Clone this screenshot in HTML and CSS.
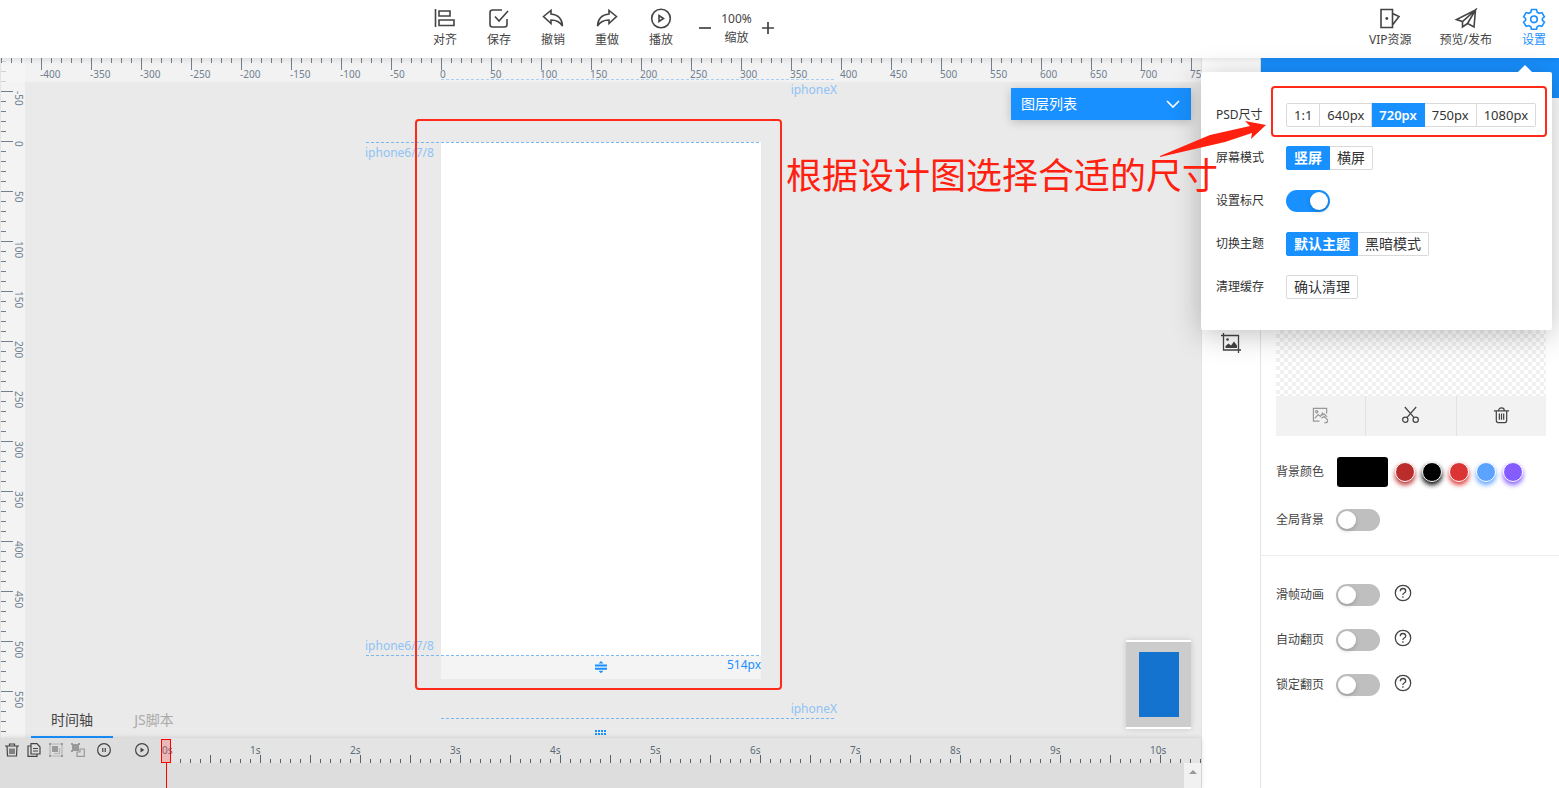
FILE: index.html
```html
<!DOCTYPE html>
<html lang="zh-CN">
<head>
<meta charset="utf-8">
<title>页面编辑器</title>
<link rel="stylesheet" href="styles.css">
</head>
<body>
<header class="header">
  <nav class="tools">
    <button class="tool"><svg class="icon" viewBox="0 0 22 22"><path d="M1.500 1v18M5 3h11v5H5zM5 12h15v5.500H5z"/></svg>对齐</button>
    <button class="tool"><svg class="icon" viewBox="0 0 22 22"><path d="M14 2H4.500Q2 2 2 4.500v12Q2 19 4.500 19h12q2.500 0 2.500-2.500V11M7 8.500l4 4.500 9-10"/></svg>保存</button>
    <button class="tool"><svg class="icon" viewBox="0 0 22 22"><path d="M1.500 8.500 9 2.500v3.500c6 .5 11 4 11.500 12-2.500-4-6-6-11.500-6v3.500z"/></svg>撤销</button>
    <button class="tool"><svg class="icon" viewBox="0 0 22 22"><path d="M20.500 8.500 13 2.500v3.500c-6 .5-11 4-11.500 12 2.500-4 6-6 11.500-6v3.500z"/></svg>重做</button>
    <button class="tool"><svg class="icon" viewBox="0 0 22 22"><circle cx="11" cy="10.500" r="9.300"/><path d="M9 7.500v6l4.500-3z"/></svg>播放</button>
    <div class="zoom">
      <button class="step" aria-label="缩小"><svg viewBox="0 0 14 14"><path d="M1 7h12"/></svg></button>
      <span class="level">100%<br>缩放</span>
      <button class="step" aria-label="放大"><svg viewBox="0 0 14 14"><path d="M1 7h12M7 1v12"/></svg></button>
    </div>
  </nav>
  <nav class="actions">
    <button class="tool"><svg class="icon" viewBox="0 0 22 22"><path d="M2 1.500h11.500v18H2zM13.500 5.500l6.500 3-6.500 8.500"/><circle class="solid" cx="7.800" cy="10.500" r="1.400"/></svg>VIP资源</button>
    <button class="tool"><svg class="icon" viewBox="0 0 22 22"><path d="M20.500 2 1.500 11.500l6 2L20.500 2 19 19l-6.500-3.500zM7.500 13.500v5.500l5-3.500M20.500 2l-8 13.500"/></svg>预览/发布</button>
    <button class="tool current"><svg class="icon" viewBox="0 0 22 22"><path d="M8.500 1.500h5l.7 2.700 2 1.100 2.700-.7 2.500 4.200-2 1.700 0 1.800 2 1.800-2.500 4.200-2.700-.8-2 1.200-.7 2.500h-5l-.7-2.500-2-1.200-2.700.8-2.500-4.200 2-1.800V10.500l-2-1.700 2.500-4.200 2.700.7 2-1.100z"/><circle cx="11" cy="11.300" r="3.300"/></svg>设置</button>
  </nav>
</header>

<main class="main">
  <section class="workspace">
    <div class="stage">
      <div class="ruler-y">
        <span>-50</span><span>0</span><span>50</span><span>100</span><span>150</span><span>200</span><span>250</span><span>300</span><span>350</span><span>400</span><span>450</span><span>500</span><span>550</span>
      </div>
      <div class="ruler-x">
        <span>-400</span><span>-350</span><span>-300</span><span>-250</span><span>-200</span><span>-150</span><span>-100</span><span>-50</span><span>0</span><span>50</span><span>100</span><span>150</span><span>200</span><span>250</span><span>300</span><span>350</span><span>400</span><span>450</span><span>500</span><span>550</span><span>600</span><span>650</span><span>700</span><span>750</span>
      </div>
      <div class="guide x-top"></div>
      <span class="device x-top-name">iphoneX</span>
      <div class="page"></div>
      <div class="page-foot">
        <svg class="resize" viewBox="0 0 12 12"><path d="M0 3.500h12v2H0zM0 6.700h12v2H0zM3.500 2.500 6 0l2.500 2.500zM3.500 9.700 6 12.200l2.500-2.500z"/></svg>
        <span>514px</span>
      </div>
      <div class="guide six-top"></div>
      <span class="device six-top-name">iphone6/7/8</span>
      <div class="guide six-bottom"></div>
      <span class="device six-bottom-name">iphone6/7/8</span>
      <span class="device x-bottom-name">iphoneX</span>
      <div class="guide x-bottom"></div>
      <div class="grip"></div>
      <button class="layers">图层列表<svg viewBox="0 0 14 8"><path d="M1 1l6 6 6-6"/></svg></button>
      <div class="minimap"><div></div></div>
      <div class="tabs">
        <button class="tab selected">时间轴</button>
        <button class="tab">JS脚本</button>
      </div>
    </div>

    <div class="timeline">
      <div class="time-tools">
        <button aria-label="删除"><svg viewBox="0 0 14 14"><path d="M0 3h14M4.500 3V1h5v2M2 3l.5 10h9L12 3M5 5.500v5.500M7 5.500v5.500M9 5.500v5.500"/></svg></button>
        <button aria-label="复制"><svg viewBox="0 0 14 14"><path d="M4 .7h6L13 4v7H4zM4 3H1v10.300h9V11M6 5.500h5M6 8h5"/></svg></button>
        <button class="muted" aria-label="组合"><svg viewBox="0 0 14 14"><path class="faint" d="M1 1h12v12H1z"/><path class="solid" d="M3 3h6v6H3zM0 0h2v2H0zM12 0h2v2h-2zM0 12h2v2H0zM12 12h2v2h-2z"/><path class="faint" d="M5 10.500h5.500V5"/></svg></button>
        <button class="muted" aria-label="拆分"><svg viewBox="0 0 14 14"><path class="solid" d="M1 1h7v7H1zM0 0h2v2H0zM7 0h2v2H7zM0 7h2v2H0z"/><path d="M9 6h4.300v7.300H6V9h3z"/></svg></button>
        <button aria-label="暂停"><svg viewBox="0 0 14 14"><circle cx="7" cy="7" r="6.400"/><path d="M5.800 5v4M8.200 5v4"/></svg></button>
        <button class="play" aria-label="播放时间轴"><svg viewBox="0 0 14 14"><circle cx="7" cy="7" r="6.400"/><path class="solid" d="M5.500 4.500v5L9.300 7z"/></svg></button>
      </div>
      <div class="track">
        <div class="seconds">
          <span>0s</span><span>1s</span><span>2s</span><span>3s</span><span>4s</span><span>5s</span><span>6s</span><span>7s</span><span>8s</span><span>9s</span><span>10s</span>
        </div>
        <div class="playhead"></div>
        <button class="scroll-up" aria-label="向上滚动"><svg viewBox="0 0 8 4"><path d="M0 4 4 0l4 4z"/></svg></button>
      </div>
    </div>
  </section>

  <aside class="rail">
    <button aria-label="图片"><svg viewBox="0 0 20 20"><path d="M2.500 0v17H20M0 2.500h17.500V20"/><circle class="solid" cx="6.500" cy="6.500" r="1.300"/><path class="solid" d="M4.500 15v-2l3-2.500 2.500 2 3-4 3 4V15z"/></svg></button>
  </aside>

  <aside class="panel">
    <div class="panel-head"></div>
    <section class="background">
      <div class="preview"></div>
      <div class="preview-tools">
        <button class="muted" aria-label="更换图片"><svg viewBox="0 0 18 18"><path d="M8 15H1.500V1.500h14V7M3 12l3.500-4 2.500 2 2.500-4M9 9l4-1.500 3 3M10 12l3-2 3 3q2 4-3 3.500"/><circle cx="5" cy="5" r="1.200"/></svg></button>
        <button aria-label="裁剪"><svg viewBox="0 0 18 18"><path d="M3 0l10 11.500M15 0 5 11.500"/><circle cx="3.500" cy="13.500" r="2.800"/><circle cx="14.500" cy="13.500" r="2.800"/></svg></button>
        <button aria-label="删除图片"><svg viewBox="0 0 18 18"><path d="M1 4h16M6 4Q6 1 9 1t3 3M3.500 4v10q0 2.500 2 2.500h7q2 0 2-2.500V4M6.700 7v6.500M9 7v6.500M11.300 7v6.500"/></svg></button>
      </div>
      <div class="field color">
        <span>背景颜色</span>
        <button class="swatch" aria-label="当前颜色"></button>
        <button class="dot crimson" aria-label="深红"></button>
        <button class="dot black" aria-label="黑色"></button>
        <button class="dot red" aria-label="红色"></button>
        <button class="dot blue" aria-label="蓝色"></button>
        <button class="dot violet" aria-label="紫色"></button>
      </div>
      <label class="field global"><span>全局背景</span><input class="switch" type="checkbox"></label>
    </section>
    <section class="paging">
      <div class="field"><label for="slide">滑帧动画</label><input class="switch" id="slide" type="checkbox"><button class="help" aria-label="滑帧动画说明"><svg viewBox="0 0 18 18"><circle cx="9" cy="9" r="7.700"/><path d="M6.300 7.200q0-2.700 2.700-2.700t2.700 2.500q0 1.200-1.500 2T8.900 11M8.900 12.300v1.400"/></svg></button></div>
      <div class="field"><label for="auto">自动翻页</label><input class="switch" id="auto" type="checkbox"><button class="help" aria-label="自动翻页说明"><svg viewBox="0 0 18 18"><circle cx="9" cy="9" r="7.700"/><path d="M6.300 7.200q0-2.700 2.700-2.700t2.700 2.500q0 1.200-1.500 2T8.900 11M8.900 12.300v1.400"/></svg></button></div>
      <div class="field"><label for="lock">锁定翻页</label><input class="switch" id="lock" type="checkbox"><button class="help" aria-label="锁定翻页说明"><svg viewBox="0 0 18 18"><circle cx="9" cy="9" r="7.700"/><path d="M6.300 7.200q0-2.700 2.700-2.700t2.700 2.500q0 1.200-1.500 2T8.900 11M8.900 12.300v1.400"/></svg></button></div>
    </section>
  </aside>
</main>

<div class="settings">
  <div class="setting"><span class="name">PSD尺寸</span>
    <div class="segments sizes">
      <label><input type="radio" name="psd">1:1</label><label><input type="radio" name="psd">640px</label><label><input type="radio" name="psd" checked>720px</label><label><input type="radio" name="psd">750px</label><label><input type="radio" name="psd">1080px</label>
    </div>
  </div>
  <div class="setting"><span class="name">屏幕模式</span>
    <div class="segments"><label><input type="radio" name="screen" checked>竖屏</label><label><input type="radio" name="screen">横屏</label></div>
  </div>
  <div class="setting"><label class="name" for="ruler">设置标尺</label><input class="switch" id="ruler" type="checkbox" checked></div>
  <div class="setting"><span class="name">切换主题</span>
    <div class="segments"><label><input type="radio" name="theme" checked>默认主题</label><label><input type="radio" name="theme">黑暗模式</label></div>
  </div>
  <div class="setting"><span class="name">清理缓存</span><button class="clear">确认清理</button></div>
</div>

<div class="mark mark-page"></div>
<div class="mark mark-size"></div>
<p class="note">根据设计图选择合适的尺寸</p>
<svg class="arrow" viewBox="0 0 106 38"><path d="M0 36 50 15 90 6 85 1l21 4-15 14 1-6-27 9L0 37z"/></svg>
</body>
</html>
```
FILE: styles.css
```css
* { box-sizing: border-box; }
body {
  margin: 0;
  height: 100vh;
  display: flex;
  flex-direction: column;
  position: relative;
  overflow: hidden;
  background: #fff;
  color: #444;
  font: 12px/18px "Noto Sans", "Noto Sans CJK SC", sans-serif;
}
button {
  display: flex;
  align-items: center;
  justify-content: center;
  padding: 0;
  border: 0;
  background: none;
  color: inherit;
  font: inherit;
  cursor: pointer;
}
svg { fill: none; stroke: currentColor; stroke-width: 1.3; overflow: visible; }
.solid { fill: currentColor; stroke: none; }
.faint { opacity: .6; }

/* Header */
.header {
  display: flex;
  flex: none;
  height: 58px;
  position: relative;
  z-index: 2;
  background: #fff;
  box-shadow: 0 1px 6px rgba(0, 0, 0, .12);
}
.tools { flex: 1; display: flex; justify-content: center; padding-right: 2px; }
.tool { flex-direction: column; width: 54px; height: 58px; padding-bottom: 2px; gap: 1px; white-space: nowrap; }
.icon { width: 22px; height: 22px; stroke-width: 1.6; }
.zoom { display: flex; align-items: center; padding: 0 6px 2px 10px; }
.step svg { width: 14px; height: 14px; stroke-width: 1.7; }
.level { width: 49px; text-align: center; line-height: 19px; }
.actions { width: 358px; display: flex; justify-content: flex-end; gap: 20px; padding-right: 13px; }
.actions .tool { width: auto; min-width: 24px; }
.actions .tool:nth-child(2) { margin: 0 10px 0 8px; }
.current { color: #1890ff; }

/* Workspace */
.main { flex: 1; min-height: 0; display: flex; }
.workspace { flex: 1; min-width: 0; display: flex; flex-direction: column; }
.stage { flex: 1; position: relative; overflow: hidden; background: #eaeaea; border-left: 1px solid #e4e4e4; }
.ruler-x, .ruler-y { position: absolute; top: 0; left: 0; display: flex; overflow: hidden; color: #708090; font-size: 10px; line-height: 12px; }
.ruler-x {
  width: 100%;
  height: 24px;
  padding-left: 39px;
  background:
    repeating-linear-gradient(90deg, #708090 0 1px, transparent 1px 50px) 40px 0 / 100% 12px no-repeat,
    repeating-linear-gradient(90deg, #708090 0 1px, transparent 1px 10px) 0 0 / 100% 5px no-repeat,
    rgba(245, 245, 245, .7);
}
.ruler-x span { flex: none; width: 50px; padding-top: 10px; }
.ruler-y {
  flex-direction: column;
  width: 24px;
  height: 100%;
  padding-top: 33px;
  background:
    repeating-linear-gradient(#708090 0 1px, transparent 1px 50px) 0 33px / 12px 100% no-repeat,
    repeating-linear-gradient(#708090 0 1px, transparent 1px 10px) 0 3px / 5px 100% no-repeat,
    #f3f3f3;
}
.ruler-y span { flex: none; width: 24px; height: 50px; padding-right: 0; writing-mode: vertical-rl; }
.page { position: absolute; left: 440px; top: 84px; width: 320px; height: 514px; background: #fff; }
.page-foot {
  position: absolute;
  left: 440px;
  top: 598px;
  width: 320px;
  height: 23px;
  display: flex;
  align-items: flex-start;
  justify-content: flex-end;
  background: #f4f4f4;
  color: #1890ff;
}
.resize { position: absolute; left: 154px; top: 5px; width: 12px; height: 12px; fill: #1890ff; stroke: none; }
.guide {
  position: absolute;
  height: 1px;
  background: repeating-linear-gradient(90deg, #7ab8f5 0 3px, transparent 3px 5px);
}
.device { position: absolute; color: #8fc3f5; }
.x-top { left: 440px; top: 21px; width: 395px; opacity: .6; }
.x-top-name { right: 364px; top: 23px; }
.x-bottom { left: 440px; top: 660px; width: 395px; }
.x-bottom-name { right: 364px; top: 642px; }
.six-top { left: 365px; top: 84px; width: 395px; }
.six-top-name { left: 364px; top: 86px; }
.six-bottom { left: 365px; top: 597px; width: 395px; }
.six-bottom-name { left: 364px; top: 579px; }
.grip {
  position: absolute;
  left: 594px;
  top: 672px;
  width: 12px;
  height: 5px;
  background:
    repeating-linear-gradient(90deg, #1890ff 0 2px, transparent 2px 3px) 0 0 / 100% 2px no-repeat,
    repeating-linear-gradient(90deg, #1890ff 0 2px, transparent 2px 3px) 0 3px / 100% 2px no-repeat;
}
.layers {
  position: absolute;
  right: 10px;
  top: 30px;
  width: 180px;
  height: 32px;
  justify-content: space-between;
  padding: 0 11px 0 10px;
  background: #1890ff;
  color: #fff;
  font-size: 14px;
  box-shadow: 0 2px 10px rgba(0, 0, 0, .2);
}
.layers svg { width: 14px; height: 8px; stroke-width: 1.6; }
.minimap {
  position: absolute;
  right: 10px;
  bottom: 9px;
  width: 65px;
  padding: 10px 12px 10px 13px;
  background: #ccc;
  border: solid #fff;
  border-width: 2px 0;
  box-shadow: 0 0 6px rgba(0, 0, 0, .15);
}
.minimap div { height: 65px; background: #1473cf; }
.tabs { position: absolute; left: 30px; bottom: 0; display: flex; }
.tab { width: 82px; height: 34px; border-bottom: 2px solid transparent; color: #aaa; font-size: 14px; }
.tab.selected { border-color: #1890ff; color: #444; }

/* Timeline */
.timeline { flex: none; height: 50px; display: flex; background: #ddd; box-shadow: 0 0 5px rgba(0, 0, 0, .15); z-index: 1; }
.time-tools { flex: none; display: flex; align-items: center; gap: 8px; width: 160px; height: 24px; padding-left: 5px; }
.time-tools svg { width: 14px; height: 14px; display: block; stroke-width: 1.2; }
.time-tools .play { margin-left: 16px; }
.time-tools button:nth-child(5) { margin-left: 4px; }
.muted { color: #999; }
.track { flex: 1; min-width: 0; position: relative; }
.seconds {
  display: flex;
  height: 25px;
  overflow: hidden;
  color: #5c6b75;
  font-size: 10px;
  line-height: 12px;
  padding-top: 6px;
  background:
    repeating-linear-gradient(90deg, #546570 0 1px, transparent 1px 50px) 50px 17px / 100% 8px no-repeat,
    repeating-linear-gradient(90deg, #546570 0 1px, transparent 1px 10px) 20px 21px / 100% 4px no-repeat,
    #e4e4e4;
}
.seconds span { flex: none; width: 100px; }
.seconds span:first-child { width: 90px; padding-left: 2px; }
.playhead { position: absolute; left: 1px; top: 1px; width: 10px; height: 24px; border: 1px solid #f00; background: rgba(255, 80, 80, .3); }
.playhead::after { content: ""; position: absolute; left: 4px; top: 23px; width: 1px; height: 26px; background: #f00; }
.scroll-up { position: absolute; right: 0; bottom: 0; width: 17px; height: 25px; padding-bottom: 7px; background: #f1f1f1; color: #999; }
.scroll-up svg { width: 8px; height: 4px; fill: currentColor; stroke: none; }

/* Right side */
.rail { flex: none; width: 60px; display: flex; justify-content: center; align-items: flex-start; padding-top: 275px; border: solid #e4e4e4; border-width: 0 1px; }
.rail svg { width: 20px; height: 20px; display: block; }
.panel { flex: none; width: 298px; }
.panel-head { height: 40px; background: #1890ff; }
.background { padding: 0 13px 24px 15px; border-bottom: 1px solid #eee; }
.preview { height: 298px; background: repeating-conic-gradient(#f0f0f0 0 25%, #fff 0 50%) 0 0 / 8px 8px; }
.preview-tools { display: flex; height: 40px; background: #f2f2f2; }
.preview-tools button { flex: 1; padding-bottom: 2px; }
.preview-tools button + button { border-left: 1px solid #e2e2e2; }
.preview-tools svg { width: 17px; height: 17px; }
.field { display: flex; align-items: center; gap: 12px; }
.color { height: 30px; margin-top: 21px; gap: 7px; }
.color span { margin-right: 6px; }
.swatch { width: 51px; height: 30px; border-radius: 3px; background: #000; }
.dot { width: 20px; height: 20px; border: 1px solid #fff; border-radius: 50%; }
.crimson { background: #bb2c2c; box-shadow: 0 3px 5px #bb2c2c; }
.black { background: #000; box-shadow: 0 3px 5px #000; }
.red { background: #db3434; box-shadow: 0 3px 5px #db3434; }
.blue { background: #5ca2ff; box-shadow: 0 3px 5px #5ca2ff; }
.violet { background: #845cff; box-shadow: 0 3px 5px #845cff; }
.global { height: 22px; margin-top: 22px; }
.switch {
  appearance: none;
  flex: none;
  width: 44px;
  height: 22px;
  margin: 0;
  padding: 2px;
  display: flex;
  border-radius: 11px;
  background: #bfbfbf;
  cursor: pointer;
}
.switch::before { content: ""; width: 18px; height: 18px; border-radius: 50%; background: #fff; box-shadow: 0 2px 4px rgba(0, 35, 11, .2); }
.switch:checked { justify-content: flex-end; background: #1890ff; }
.paging { display: flex; flex-direction: column; gap: 23px; padding: 28px 15px; }
.paging .field { height: 22px; }
.paging label { padding-bottom: 1px; }
.help { margin: 0 0 5px 2px; }
.help svg { width: 18px; height: 18px; display: block; }

/* Settings popover */
.settings {
  position: absolute;
  z-index: 3;
  right: 7px;
  top: 72px;
  width: 351px;
  padding: 21px 15px 22px;
  border-radius: 2px;
  background: #fff;
  color: #333;
  box-shadow: 0 4px 30px rgba(0, 0, 0, .25);
}
.settings::before { content: ""; position: absolute; right: 20px; top: -7px; border: solid transparent; border-width: 0 7px 7px; border-bottom-color: #fff; }
.setting { display: flex; align-items: center; height: 43px; }
.name { flex: none; width: 70px; }
.segments { display: flex; font-size: 14px; }
.segments label { height: 24px; padding: 0 7px; border: 1px solid #d9d9d9; line-height: 22px; cursor: pointer; white-space: nowrap; }
.segments label + label { border-left: 0; }
.segments label:first-child { border-radius: 2px 0 0 2px; }
.segments label:last-child { border-radius: 0 2px 2px 0; }
.segments label:has(:checked) { border-color: #1890ff; background: #1890ff; color: #fff; font-weight: 600; }
.segments input { position: absolute; opacity: 0; pointer-events: none; }
.sizes { font-size: 13px; }
.clear { height: 24px; padding: 0 7px; border: 1px solid #d9d9d9; border-radius: 2px; font-size: 14px; }

/* Annotations */
.mark { position: absolute; z-index: 4; border: 2px solid #ff2a1a; border-radius: 4px; pointer-events: none; }
.mark-page { left: 415px; top: 119px; width: 367px; height: 571px; }
.mark-size { right: 12px; top: 86px; width: 276px; height: 51px; }
.note { position: absolute; z-index: 4; right: 341px; top: 150px; margin: 0; color: #ff2010; font-size: 36px; line-height: 52px; white-space: nowrap; pointer-events: none; }
.arrow { position: absolute; z-index: 4; right: 293px; top: 120px; width: 106px; height: 38px; fill: #ff2010; stroke: none; pointer-events: none; }
```
